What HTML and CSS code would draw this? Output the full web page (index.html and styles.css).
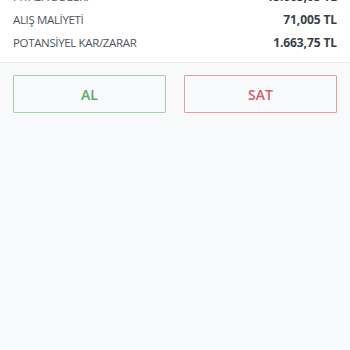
FILE: index.html
```html
<!DOCTYPE html>
<html lang="tr">
<head>
<meta charset="utf-8">
<link rel="stylesheet" href="styles.css">
</head>
<body>
<div class="summary">
  <div class="rows">
    <div class="row"><span class="label">PİYASA DEĞERİ</span><span class="value">15.665,05 TL</span></div>
    <div class="row"><span class="label">ALIŞ MALİYETİ</span><span class="value">71,005 TL</span></div>
    <div class="row"><span class="label">POTANSİYEL KAR/ZARAR</span><span class="value">1.663,75 TL</span></div>
  </div>
</div>
<div class="actions">
  <button class="btn buy">AL</button>
  <button class="btn sell">SAT</button>
</div>
</body>
</html>
```

FILE: styles.css
```css
html, body {
  margin: 0;
  padding: 0;
  background: #f8f9fa;
  height: 100%;
  font-family: "Open Sans", "Noto Sans", sans-serif;
}
.summary {
  background: #ffffff;
  border-bottom: 1px solid #eceef0;
  padding: 0 13px 8px 13px;
  overflow: hidden;
}
.rows {
  margin-top: -15px;
}
.row {
  display: flex;
  justify-content: space-between;
  align-items: center;
  height: 23px;
}
.label {
  font-size: 11.5px;
  letter-spacing: -0.35px;
  color: #50555b;
}
.value {
  font-size: 12px;
  letter-spacing: -0.1px;
  font-weight: 700;
  color: #3a3f45;
}
.actions {
  display: flex;
  gap: 18px;
  padding: 12px 13px;
}
.btn {
  flex: 1;
  height: 38px;
  background: #f8f9fa;
  font-family: "Open Sans", "Noto Sans", sans-serif;
  font-size: 14px;
  font-weight: 600;
  border-radius: 1px;
  padding: 0;
}
.buy {
  border: 1px solid #9fd2a6;
  color: #5aaa64;
}
.sell {
  border: 1px solid #e2a1a1;
  color: #d0606a;
}
```
